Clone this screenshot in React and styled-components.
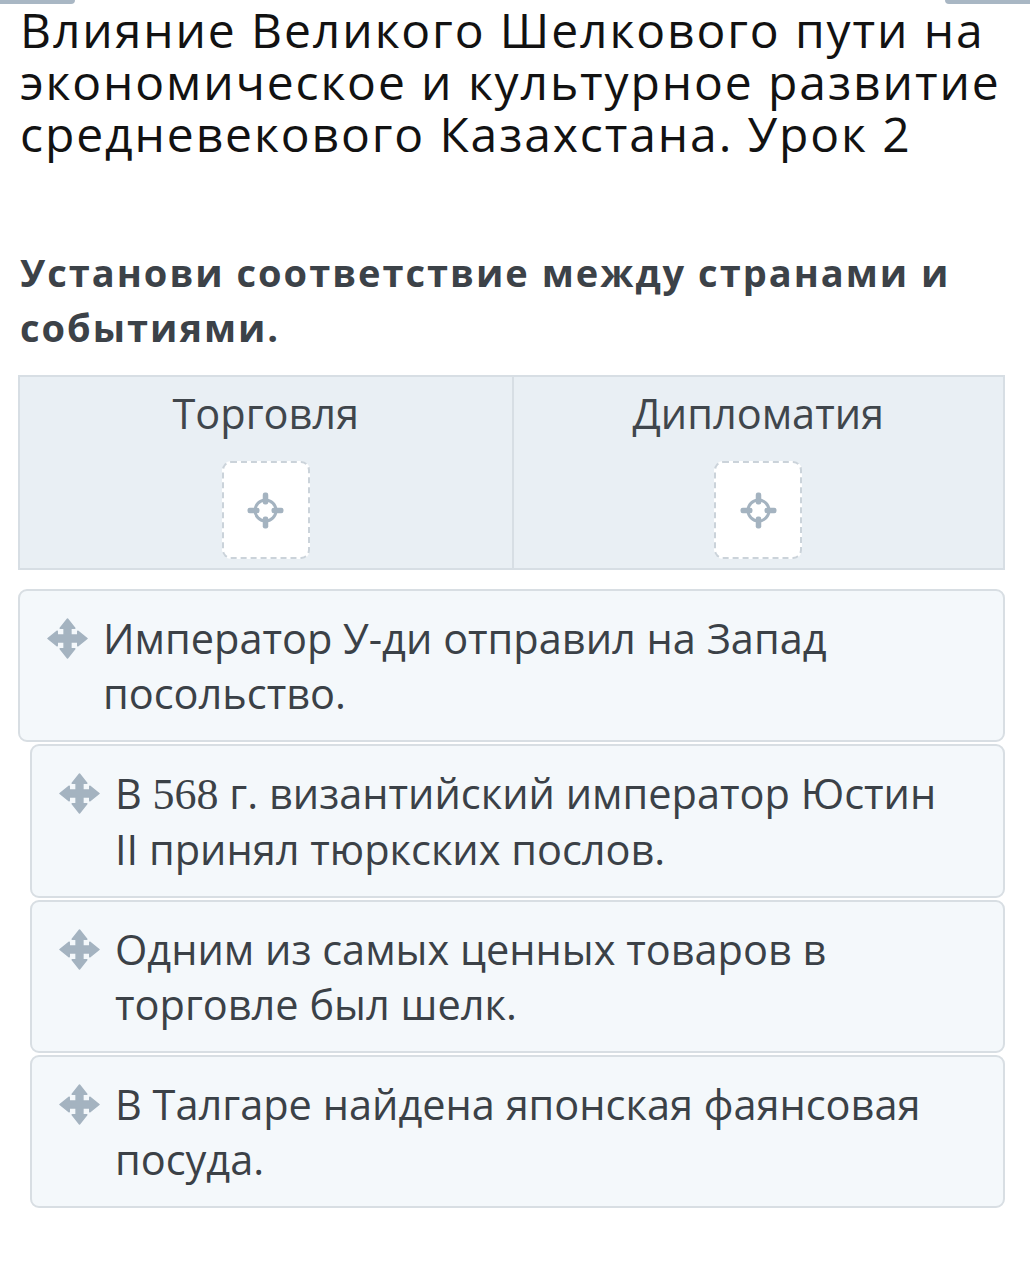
import React from 'react';
import styled, { createGlobalStyle } from 'styled-components';

const GlobalStyle = createGlobalStyle`
  html, body {
    margin: 0;
    padding: 0;
    background: #ffffff;
  }
  body {
    font-family: 'Open Sans', 'Noto Sans', sans-serif;
  }
`;

const columns = [
  { id: 'trade', title: 'Торговля' },
  { id: 'diplomacy', title: 'Дипломатия' },
];

const events = [
  { id: 1, text: ['Император У-ди отправил на Запад посольство.'], lifted: true },
  { id: 2, text: ['В ', { num: '568' }, ' г. византийский император Юстин II принял тюркских послов.'] },
  { id: 3, text: ['Одним из самых ценных товаров в торговле был шелк.'] },
  { id: 4, text: ['В Талгаре найдена японская фаянсовая посуда.'] },
];

function TargetIcon() {
  return (
    <svg width='37' height='37' viewBox='0 0 37 37'>
      <circle cx='18.5' cy='18.5' r='10.5' fill='none' stroke='#a4b3c0' strokeWidth='3' />
      <rect x='15.75' y='0.5' width='5.5' height='12' rx='2.2' fill='#a4b3c0' />
      <rect x='15.75' y='24.5' width='5.5' height='12' rx='2.2' fill='#a4b3c0' />
      <rect x='0.5' y='15.75' width='12' height='5.5' rx='2.2' fill='#a4b3c0' />
      <rect x='24.5' y='15.75' width='12' height='5.5' rx='2.2' fill='#a4b3c0' />
    </svg>
  );
}

function MoveIcon() {
  return (
    <svg width='41' height='41' viewBox='0 0 42 42'>
      <path
        d='M21 1 L28.5 10.5 L24.5 10.5 L24.5 17.5 L31.5 17.5 L31.5 13.5 L41 21 L31.5 28.5 L31.5 24.5 L24.5 24.5 L24.5 31.5 L28.5 31.5 L21 41 L13.5 31.5 L17.5 31.5 L17.5 24.5 L10.5 24.5 L10.5 28.5 L1 21 L10.5 13.5 L10.5 17.5 L17.5 17.5 L17.5 10.5 L13.5 10.5 Z'
        fill='#a4b3c0'
        stroke='#a4b3c0'
        strokeWidth='1.5'
        strokeLinejoin='round'
      />
    </svg>
  );
}

export default function App() {
  return (
    <>
      <GlobalStyle />
      <Page>
        <TopEdge>
          <EdgeTab side='left' />
          <EdgeTab side='right' />
        </TopEdge>
        <Content>
          <Title>
            Влияние Великого Шелкового пути на экономическое и культурное
            развитие средневекового Казахстана. Урок 2
          </Title>
          <Question>Установи соответствие между странами и событиями.</Question>
          <Board>
            {columns.map((col) => (
              <Column key={col.id}>
                <ColumnTitle>{col.title}</ColumnTitle>
                <DropZone>
                  <TargetIcon />
                </DropZone>
              </Column>
            ))}
          </Board>
          <CardList>
            {events.map((ev) => (
              <Card key={ev.id} $lifted={ev.lifted}>
                <Handle>
                  <MoveIcon />
                </Handle>
                <CardText>
                  {ev.text.map((part, i) =>
                    typeof part === 'string' ? (
                      <React.Fragment key={i}>{part}</React.Fragment>
                    ) : (
                      <Num key={i}>{part.num}</Num>
                    )
                  )}
                </CardText>
              </Card>
            ))}
          </CardList>
        </Content>
      </Page>
    </>
  );
}

const Page = styled.div`
  width: 1030px;
  min-height: 1287px;
  background: #ffffff;
`;

const TopEdge = styled.div`
  display: flex;
  justify-content: space-between;
  height: 4px;
`;

const EdgeTab = styled.div`
  width: ${(p) => (p.side === 'left' ? '75px' : '85px')};
  height: 4px;
  background: #a9b7c4;
  border-radius: ${(p) => (p.side === 'left' ? '0 0 6px 0' : '0 0 0 6px')};
`;

const Content = styled.div`
  padding: 0 25px 0 18px;
`;

const Title = styled.h1`
  margin: 0 -25px 0 0;
  padding: 0 0 0 2px;
  font-family: 'Open Sans', sans-serif;
  font-weight: 400;
  font-size: 48px;
  letter-spacing: 1.9px;
  line-height: 52px;
  color: #121212;
`;

const Question = styled.h2`
  margin: 85px 0 0;
  padding-left: 2px;
  font-family: 'Open Sans', sans-serif;
  font-weight: 700;
  font-size: 38px;
  letter-spacing: 2px;
  line-height: 55px;
  color: #3c4248;
`;

const Board = styled.div`
  margin-top: 20px;
  display: grid;
  grid-template-columns: 1fr 1fr;
  border: 2px solid #d7dee4;
  background: #e9eff4;
`;

const Column = styled.div`
  display: flex;
  flex-direction: column;
  align-items: center;
  padding: 10px 0 9px;
  & + & {
    border-left: 2px solid #d7dee4;
  }
`;

const ColumnTitle = styled.div`
  font-family: 'Open Sans', sans-serif;
  font-size: 41.5px;
  line-height: 52px;
  color: #40464c;
`;

const DropZone = styled.div`
  margin-top: 22px;
  width: 84px;
  height: 94px;
  display: flex;
  align-items: center;
  justify-content: center;
  background: #ffffff;
  border: 2px dashed #cbd3da;
  border-radius: 9px;
`;

const CardList = styled.div`
  margin-top: 19px;
  display: flex;
  flex-direction: column;
  gap: 2px;
`;

const Card = styled.div`
  display: flex;
  align-items: flex-start;
  gap: 15px;
  margin-left: ${(p) => (p.$lifted ? '0' : '12px')};
  padding: 20px 45px 19px 27px;
  background: #f4f8fb;
  border: 2px solid #d8dee3;
  border-radius: 9px;
`;

const Handle = styled.div`
  flex: none;
  display: flex;
  align-items: center;
  height: 55px;
`;

const CardText = styled.div`
  font-family: 'Open Sans', sans-serif;
  font-size: 41.5px;
  line-height: 55px;
  color: #3b4147;
`;

const Num = styled.span`
  font-family: 'Liberation Serif', 'DejaVu Serif', serif;
  font-size: 44px;
`;
